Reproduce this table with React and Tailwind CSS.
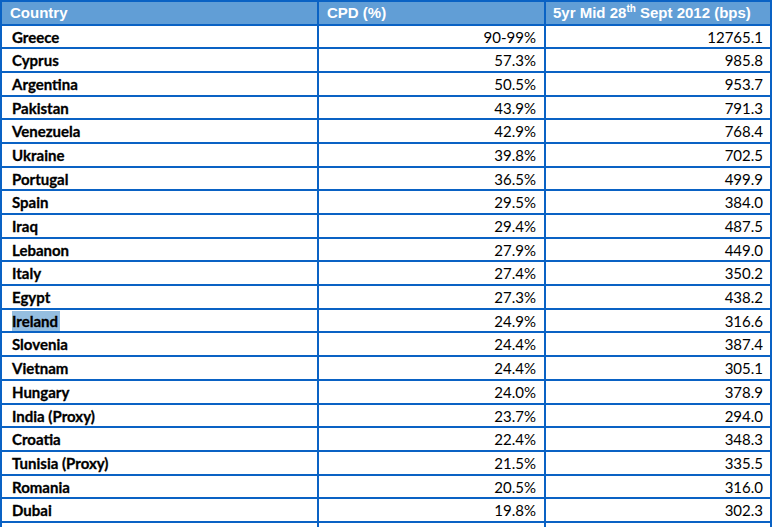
const rows = [
    ["Greece", "90-99%", "12765.1"],
    ["Cyprus", "57.3%", "985.8"],
    ["Argentina", "50.5%", "953.7"],
    ["Pakistan", "43.9%", "791.3"],
    ["Venezuela", "42.9%", "768.4"],
    ["Ukraine", "39.8%", "702.5"],
    ["Portugal", "36.5%", "499.9"],
    ["Spain", "29.5%", "384.0"],
    ["Iraq", "29.4%", "487.5"],
    ["Lebanon", "27.9%", "449.0"],
    ["Italy", "27.4%", "350.2"],
    ["Egypt", "27.3%", "438.2"],
    ["Ireland", "24.9%", "316.6"],
    ["Slovenia", "24.4%", "387.4"],
    ["Vietnam", "24.4%", "305.1"],
    ["Hungary", "24.0%", "378.9"],
    ["India (Proxy)", "23.7%", "294.0"],
    ["Croatia", "22.4%", "348.3"],
    ["Tunisia (Proxy)", "21.5%", "335.5"],
    ["Romania", "20.5%", "316.0"],
    ["Dubai", "19.8%", "302.3"],
];

const gridCols = "grid grid-cols-[315px_225px_224px] gap-x-[2px]";

const App = () => {
    return (
        <div className="w-[772px] h-[527px] overflow-hidden bg-white">
            <div className="flex flex-col gap-y-[2px] bg-[#0a62c4] pt-[2px] px-[2px] w-[772px]">
                <div className={`${gridCols} h-[21.5px]`}>
                    {["Country", "CPD (%)"].map((h) => (
                        <div
                            key={h}
                            className="bg-[#619ed6] text-white font-bold text-[15px] leading-[22px] pl-[8px] overflow-hidden font-['Liberation_Sans',Arial,sans-serif]">
                            {h}
                        </div>
                    ))}
                    <div className="bg-[#619ed6] text-white font-bold text-[15px] leading-[22px] pl-[7px] overflow-hidden font-['Liberation_Sans',Arial,sans-serif] whitespace-nowrap">
                        5yr Mid 28<span className="text-[10px] relative -top-[6px]">th</span> Sept 2012 (bps)
                    </div>
                </div>
                {rows.map(([country, cpd, bps]) => (
                    <div key={country} className={`${gridCols} h-[21.7px] overflow-hidden`}>
                        <div className="bg-white pl-[10px] pt-[1px] text-[15px] leading-[20.7px] font-bold text-black overflow-hidden font-['Lato','Noto_Sans',sans-serif] [-webkit-text-stroke:0.3px_black]">
                            {country === "Ireland" ? (
                                <span className="bg-[#95bee0] pr-[2px] py-[1px]">{country}</span>
                            ) : (
                                country
                            )}
                        </div>
                        <div className="bg-white pr-[8px] pt-[1px] text-right text-[15px] leading-[20.7px] text-black overflow-hidden font-['Lato','Noto_Sans',sans-serif]">
                            {cpd}
                        </div>
                        <div className="bg-white pr-[7px] pt-[1px] text-right text-[15px] leading-[20.7px] text-black overflow-hidden font-['Lato','Noto_Sans',sans-serif]">
                            {bps}
                        </div>
                    </div>
                ))}
                <div className={`${gridCols} h-[21.7px]`}>
                    <div className="bg-white" />
                    <div className="bg-white" />
                    <div className="bg-white" />
                </div>
            </div>
        </div>
    );
};

export default App;
